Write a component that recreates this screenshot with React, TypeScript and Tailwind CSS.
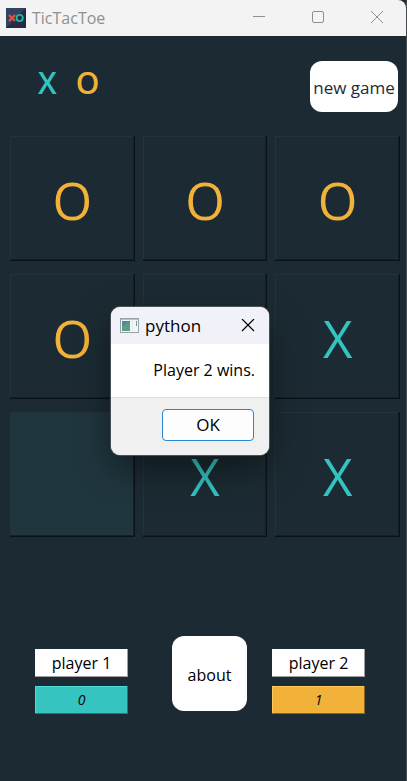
type Mark = "X" | "O" | "";

const board: Mark[] = ["O", "O", "O", "O", "", "X", "", "X", "X"];
const openCell = 6;

const markColor = { X: "text-[#33c4c0]", O: "text-[#f2b138]", "": "" };

function AppIcon() {
  return (
    <svg className="size-5" viewBox="0 0 20 20" aria-hidden="true">
      <rect width="20" height="20" fill="#34415f" />
      <path d="M0 20L20 0V20Z" fill="#252b47" />
      <path d="M3 7L9 13M9 7L3 13" stroke="#e2533f" strokeWidth="2.2" />
      <circle cx="13.7" cy="10" r="3.1" fill="none" stroke="#1db79a" strokeWidth="1.9" />
    </svg>
  );
}

function TitleBar() {
  return (
    <header className="flex h-9 items-center rounded-tr-lg bg-[#f3f3f3] pl-1.5 text-[#8f8f8f]">
      <AppIcon />
      <h1 className="ml-1.5 flex-1 text-base">TicTacToe</h1>
      <div className="mr-[22px] flex gap-[45px]">
        <button type="button" aria-label="Minimize">
          <svg className="size-3.5" viewBox="0 0 14 14" fill="none" stroke="currentColor">
            <path d="M1 5.5H13" />
          </svg>
        </button>
        <button type="button" aria-label="Maximize">
          <svg className="size-3.5" viewBox="0 0 14 14" fill="none" stroke="currentColor">
            <rect x="1.5" y="0.5" width="11" height="11" rx="1.5" />
          </svg>
        </button>
        <button type="button" aria-label="Close">
          <svg className="size-3.5" viewBox="0 0 14 14" fill="none" stroke="currentColor">
            <path d="M1 0L13 12M13 0L1 12" />
          </svg>
        </button>
      </div>
    </header>
  );
}

function Cell({ mark, open }: { mark: Mark; open: boolean }) {
  return (
    <button
      type="button"
      aria-label={mark ? undefined : "Empty cell"}
      className={`flex h-[125px] items-center justify-center pt-1 text-[51px] shadow-[inset_-1px_-1px_#0a1216,inset_-2px_-2px_#142026,inset_1px_1px_#22333b] ${markColor[mark]} ${open ? "bg-[#20363f]" : "bg-[#1c2b33]"}`}
    >
      {mark}
    </button>
  );
}

function Score({ name, score, tone }: { name: string; score: number; tone: string }) {
  return (
    <div className="flex w-[93px] flex-col gap-[9px] text-center text-black">
      <div className="h-7 bg-white text-base leading-7 shadow-[inset_-1px_-1px_#a0a0a0]">{name}</div>
      <div className={`h-7 text-sm leading-7 italic ${tone}`}>{score}</div>
    </div>
  );
}

function WinDialog() {
  return (
    <div
      role="dialog"
      aria-label="python"
      className="absolute top-[307px] left-[111px] w-[158px] overflow-hidden rounded-[9px] bg-white text-black shadow-[0_0_0_1px_#4a5257,0_14px_34px_2px_rgba(0,0,0,0.4)]"
    >
      <div className="flex h-[37px] items-center bg-[#f1f2f9] pr-3.5 pl-[9px]">
        <svg className="h-4 w-5" viewBox="0 0 20 16" aria-hidden="true">
          <rect x="0.5" y="0.5" width="18" height="14" fill="#f4f4f4" stroke="#9aa1a8" />
          <path d="M1 1.5H18" stroke="#b9c0c8" />
          <rect x="2" y="3" width="8" height="10" fill="#4d8aa8" />
          <path d="M2 13V9L8 4L10 6V13Z" fill="#5a9f80" />
          <path d="M12.5 3V13" stroke="#e4e7e9" />
          <path d="M16.5 3V8" stroke="#5aa6a0" />
        </svg>
        <h2 className="ml-[5px] flex-1 text-[17px]">python</h2>
        <button type="button" aria-label="Close dialog">
          <svg className="size-3.5" viewBox="0 0 14 14" fill="none" stroke="currentColor" strokeWidth="1.2">
            <path d="M1 0L13 12M13 0L1 12" />
          </svg>
        </button>
      </div>
      <p className="h-[53px] pr-3.5 text-right text-base leading-[53px] whitespace-nowrap">Player 2 wins.</p>
      <div className="flex h-[58px] justify-end border-t border-[#dfdfdf] bg-[#f0f0f0] pt-[11px] pr-[15px]">
        <button type="button" className="h-8 w-[92px] rounded border border-[#2a86d1] bg-[#fdfdfd] text-[17px]">
          OK
        </button>
      </div>
    </div>
  );
}

export default function App() {
  return (
    <div className="relative min-h-screen border-r border-[#454b50] bg-[#1c2b33] font-['Open_Sans','Noto_Sans',sans-serif]">
      <TitleBar />
      <main>
        <div className="flex h-[100px] items-start justify-between pt-[25px] pr-2 pl-[38px]">
          <div className="flex gap-[19px] text-[30px] leading-[44px] font-semibold">
            <span className="text-[#33c4c0]">X</span>
            <span className="text-[#f2b138]">O</span>
          </div>
          <button type="button" className="h-[51px] w-[88px] rounded-xl bg-white pt-0.5 text-[17px] whitespace-nowrap text-[#1c2b33]">
            new game
          </button>
        </div>
        <div className="grid grid-cols-3 gap-x-2 gap-y-[13px] pr-1.5 pl-2.5">
          {board.map((mark, i) => (
            <Cell key={i} mark={mark} open={i === openCell} />
          ))}
        </div>
        <div className="flex items-start pt-[99px] pl-[35px]">
          <div className="pt-[13px]">
            <Score name="player 1" score={0} tone="bg-[#36c4c1] shadow-[inset_-1px_-1px_#217d7a,inset_1px_1px_#4ddbd8]" />
          </div>
          <button type="button" className="ml-11 size-[75px] rounded-xl bg-white pt-0.5 text-base text-black">
            about
          </button>
          <div className="ml-[25px] pt-[13px]">
            <Score name="player 2" score={1} tone="bg-[#f2b138] shadow-[inset_-1px_-1px_#8b6420,inset_1px_1px_#ffc95c]" />
          </div>
        </div>
      </main>
      <WinDialog />
    </div>
  );
}
